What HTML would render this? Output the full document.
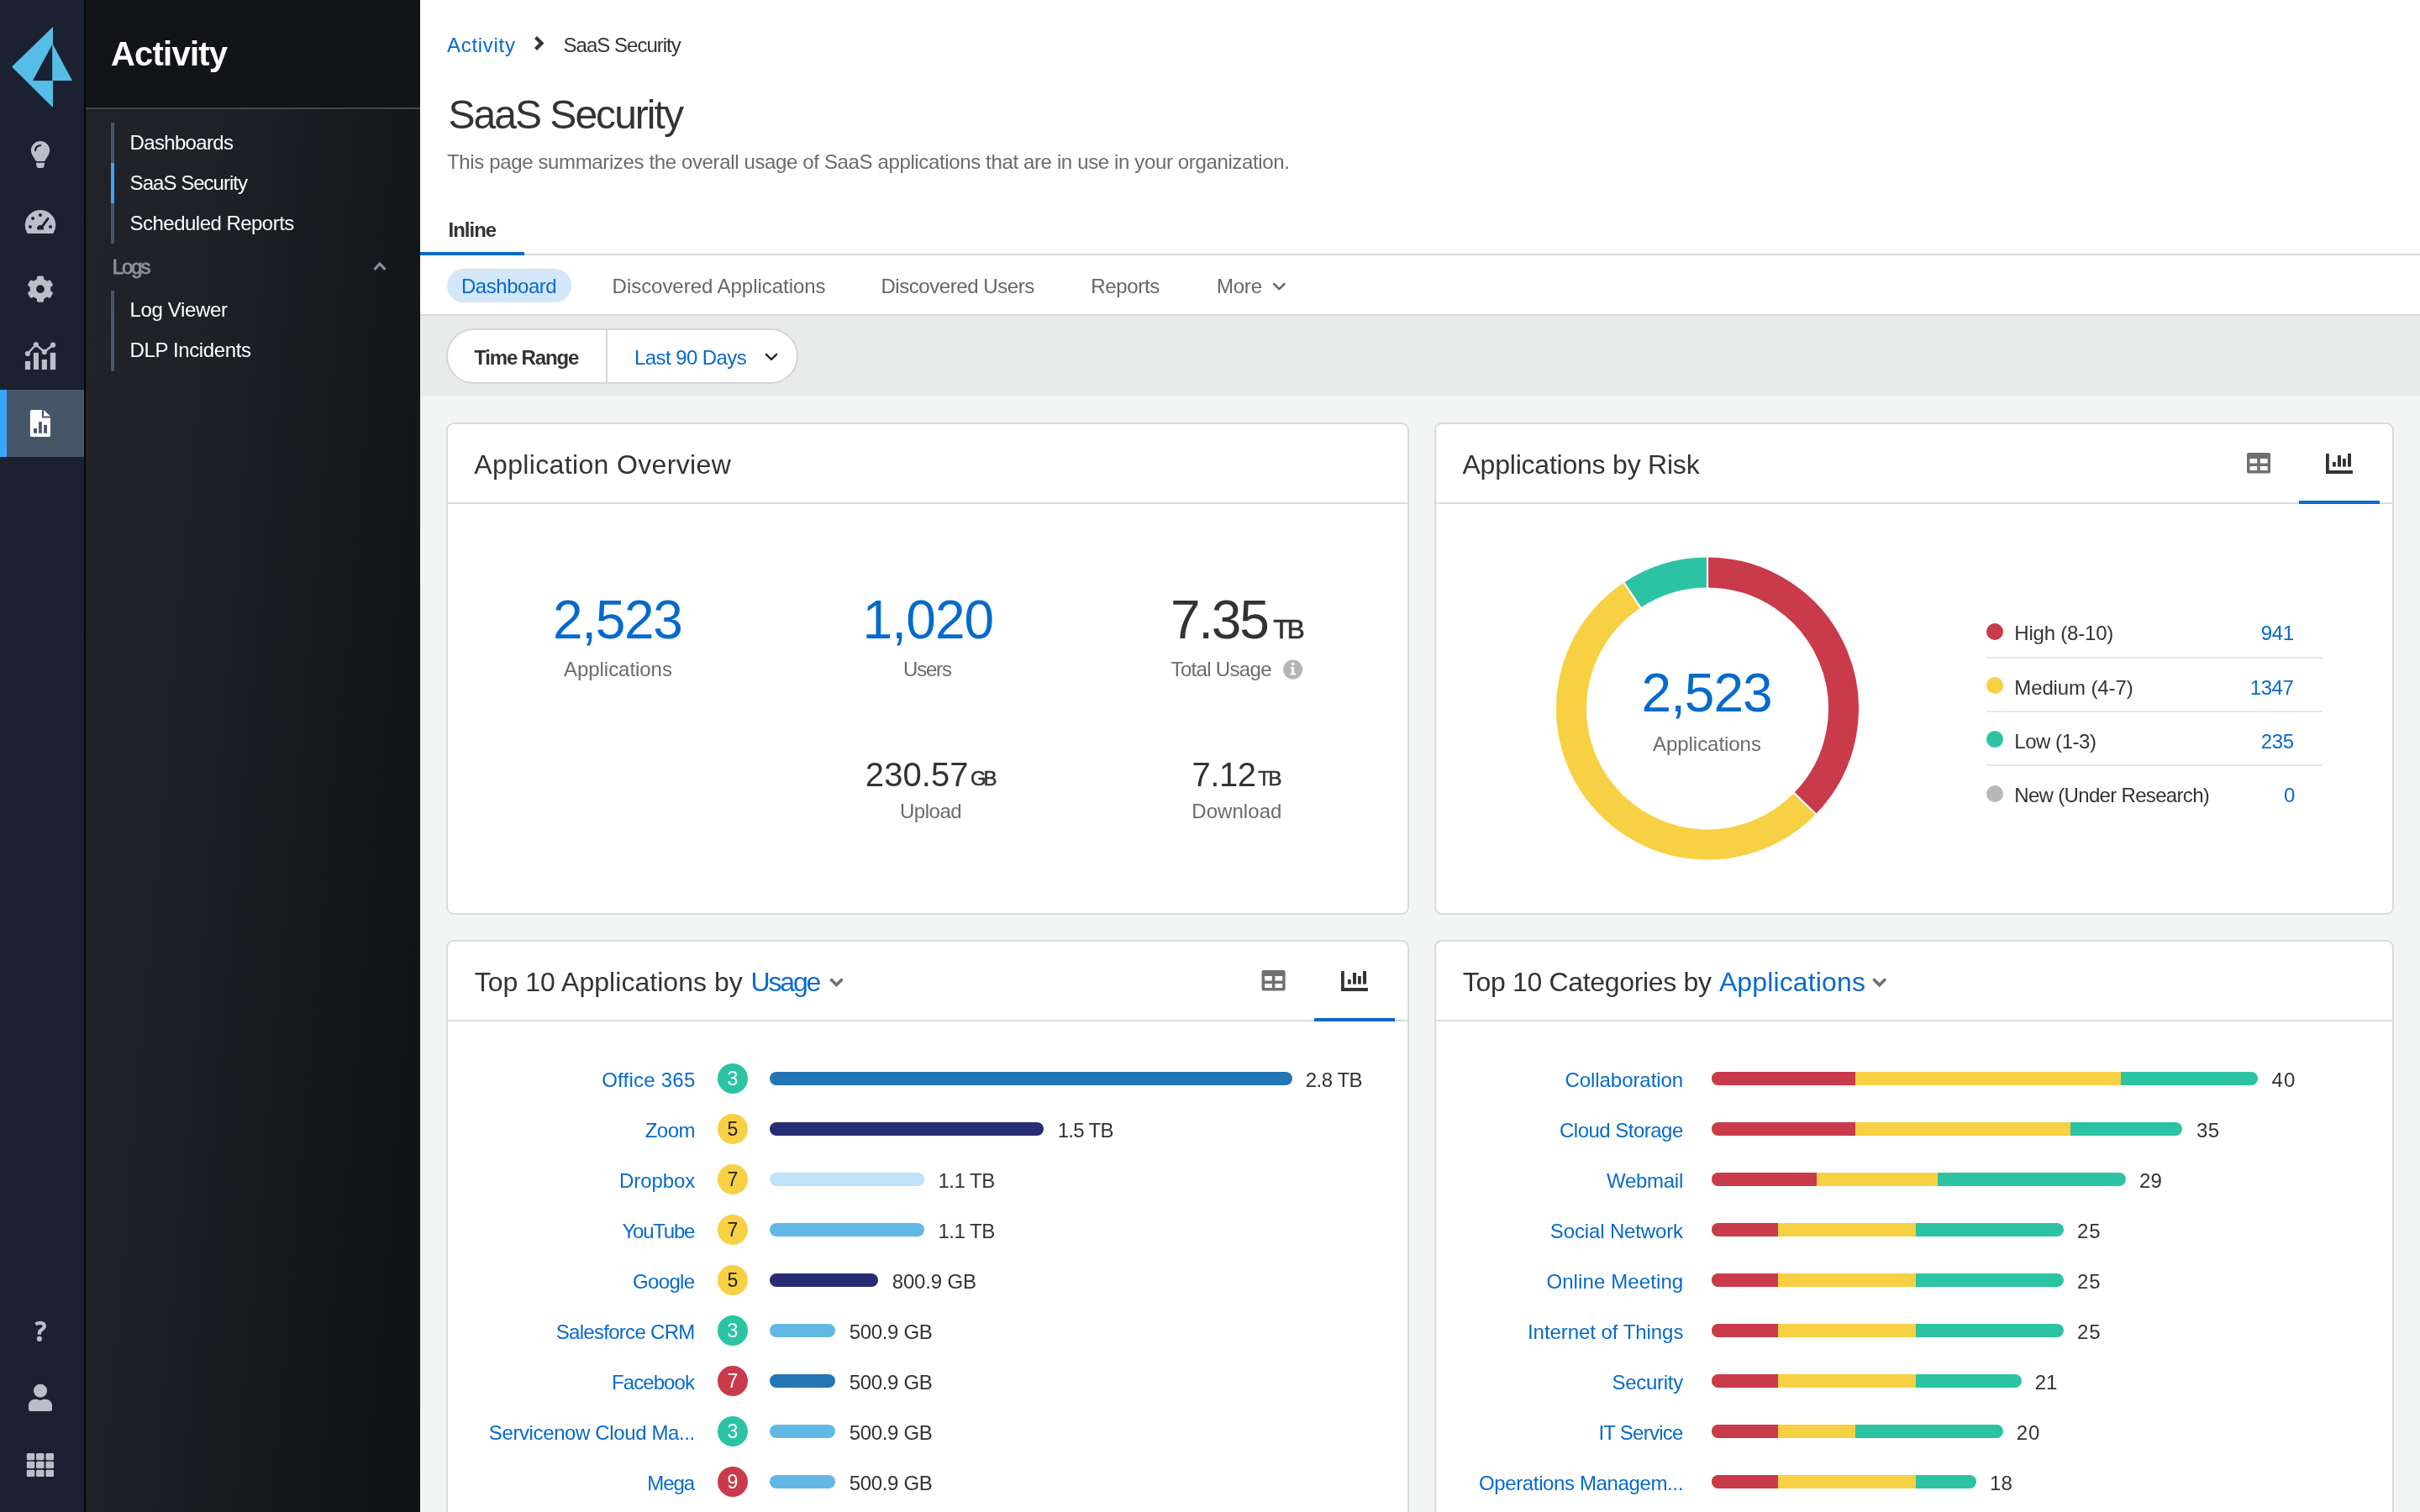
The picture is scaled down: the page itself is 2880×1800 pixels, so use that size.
<!DOCTYPE html>
<html><head><meta charset="utf-8"><title>SaaS Security</title>
<style>
html,body{margin:0;padding:0;width:2880px;height:1800px;overflow:hidden;background:#f2f5f4;}
body{position:relative;font-family:"Liberation Sans",sans-serif;}
#root{position:absolute;left:0;top:0;width:2880px;height:1800px;will-change:transform;}
.t{position:absolute;white-space:nowrap;}
svg{overflow:visible}
</style></head><body><div id="root">
<div style="position:absolute;left:0px;top:0px;width:100px;height:1800px;background:#1b2130;"></div>
<div style="position:absolute;left:100px;top:0px;width:2px;height:1800px;background:#050506;"></div>
<div style="position:absolute;left:102px;top:0px;width:398px;height:128px;background:#131417;"></div>
<div style="position:absolute;left:102px;top:128px;width:398px;height:2px;background:#45464a;"></div>
<div style="position:absolute;left:102px;top:130px;width:398px;height:1670px;background:linear-gradient(95deg,#202328 0%,#1e2126 30%,#16181c 62%,#111216 100%);"></div>
<div style="position:absolute;left:500px;top:0px;width:2380px;height:376px;background:#ffffff;"></div>
<div style="position:absolute;left:500px;top:302px;width:2380px;height:2px;background:#d9dbdb;"></div>
<div style="position:absolute;left:500px;top:374px;width:2380px;height:2px;background:#d9dbdb;"></div>
<div style="position:absolute;left:500px;top:376px;width:2380px;height:95px;background:#e9ebea;"></div>
<div style="position:absolute;left:500px;top:471px;width:2380px;height:1329px;background:#f2f5f4;"></div>
<svg style="position:absolute;left:0px;top:0px;" width="100" height="140" viewBox="0 0 100 140"><path fill="#55bde6" d="M14,79.5 L63,32 L63,128 Z M39,96 L62.2,53 L62.2,96 Z" fill-rule="evenodd"/><path fill="#55bde6" d="M63,53 L86,96 L63,96 Z"/></svg>
<svg style="position:absolute;left:20px;top:160px;" width="60" height="50" viewBox="20 160 60 50"><path fill="#b9bfc9" d="M48,167.9 A11.1,11.1 0 0 1 59.1,179 C59.1,184 55.3,187.5 53.1,192.1 L42.9,192.1 C40.7,187.5 36.9,184 36.9,179 A11.1,11.1 0 0 1 48,167.9 Z"/><path fill="#b9bfc9" d="M43,193.8 H53 L52.6,197.2 C52.3,199.1 51.1,200.1 49.4,200.1 H46.6 C44.9,200.1 43.7,199.1 43.4,197.2 Z"/><path d="M41.9,179 A7,7 0 0 1 48.1,173" stroke="#111722" stroke-width="2.1" stroke-linecap="round" fill="none"/></svg>
<svg style="position:absolute;left:20px;top:240px;" width="60" height="50" viewBox="20 240 60 50"><path fill="#b9bfc9" d="M32.7,278 A18.2,18.2 0 1 1 63.3,278 Z"/><g fill="#1b2130"><circle cx="48" cy="255.9" r="2"/><circle cx="39.1" cy="259.9" r="2"/><circle cx="35.9" cy="269.9" r="2"/><circle cx="60" cy="269.9" r="2"/><path d="M44,273.6 V272 C44,269.7 45.8,268 48,268 C50.2,268 51.9,269.6 51.9,271.8 V273.6 Z"/></g><path d="M49.5,270.5 L57,260.3" stroke="#1b2130" stroke-width="2.9" stroke-linecap="round"/></svg>
<svg style="position:absolute;left:20px;top:320px;" width="60" height="50" viewBox="20 320 60 50"><g fill="#b9bfc9"><circle cx="48" cy="344.1" r="12.3"/><rect x="43.9" y="328.5" width="8.2" height="6.299999999999999" rx="2" transform="rotate(0 48 344.1)"/><rect x="43.9" y="328.5" width="8.2" height="6.299999999999999" rx="2" transform="rotate(60 48 344.1)"/><rect x="43.9" y="328.5" width="8.2" height="6.299999999999999" rx="2" transform="rotate(120 48 344.1)"/><rect x="43.9" y="328.5" width="8.2" height="6.299999999999999" rx="2" transform="rotate(180 48 344.1)"/><rect x="43.9" y="328.5" width="8.2" height="6.299999999999999" rx="2" transform="rotate(240 48 344.1)"/><rect x="43.9" y="328.5" width="8.2" height="6.299999999999999" rx="2" transform="rotate(300 48 344.1)"/></g><circle cx="48" cy="344.1" r="4.9" fill="#1b2130"/></svg>
<svg style="position:absolute;left:20px;top:400px;" width="60" height="50" viewBox="20 400 60 50"><g fill="#b9bfc9"><rect x="29.9" y="429.9" width="6.2" height="10.1"/><rect x="39.9" y="419.9" width="6.1" height="20.1"/><rect x="49.8" y="427.9" width="6.1" height="12.1"/><rect x="59.8" y="419.9" width="6.4" height="20.1"/><circle cx="32.9" cy="421" r="3.1"/><circle cx="42.8" cy="410.3" r="3.1"/><circle cx="52.8" cy="418.9" r="3.1"/><circle cx="63" cy="410.7" r="3.1"/></g><path d="M32.9,421 L42.8,410.3 L52.8,418.9 L63,410.7" stroke="#b9bfc9" stroke-width="2.4" fill="none"/></svg>
<div style="position:absolute;left:0px;top:464px;width:100px;height:80px;background:#475568;"></div>
<div style="position:absolute;left:0px;top:464px;width:8px;height:80px;background:#3aa6fa;"></div>
<svg style="position:absolute;left:30px;top:480px;" width="40" height="50" viewBox="30 480 40 50"><path fill="#fff" d="M37.5,488 H50 V497.5 H60 V518.5 A1.6,1.6 0 0 1 58.4,520 H37.5 A1.6,1.6 0 0 1 35.9,518.4 V489.6 A1.6,1.6 0 0 1 37.5,488 Z"/><path fill="#fff" d="M52,488 L60,495.6 L52,495.6 Z"/><g fill="#475568"><rect x="40" y="510" width="4" height="5.7"/><rect x="46.1" y="502.1" width="3.7" height="13.6"/><rect x="52.1" y="506" width="3.9" height="9.7"/></g></svg>
<svg style="position:absolute;left:30px;top:1565px;" width="36" height="40" viewBox="30 1565 36 40"><path d="M42.3,1576.3 C44.5,1575.2 46.5,1574.9 48.3,1574.9 C51,1574.9 52.85,1576.5 52.85,1578.6 C52.85,1580.8 51.3,1581.9 49.5,1583 C47.6,1584.2 46.9,1585 46.9,1587 L46.9,1588.7" stroke="#b9bfc9" stroke-width="4.3" fill="none"/><circle cx="46.9" cy="1593.8" r="3.1" fill="#b9bfc9"/></svg>
<svg style="position:absolute;left:20px;top:1640px;" width="60" height="50" viewBox="20 1640 60 50"><g fill="#b9bfc9"><circle cx="48" cy="1655.7" r="8"/><path d="M34,1678 V1673.5 C34,1669 37.5,1665.8 42,1665.8 H44.3 C45.6,1666.6 46.7,1666.9 48,1666.9 C49.3,1666.9 50.4,1666.6 51.7,1665.8 H54 C58.5,1665.8 62,1669 62,1673.5 V1678 A2,2 0 0 1 60,1680 H36 A2,2 0 0 1 34,1678 Z"/></g></svg>
<svg style="position:absolute;left:20px;top:1720px;" width="60" height="50" viewBox="20 1720 60 50"><g fill="#b9bfc9"><rect x="31.8" y="1730" width="9.5" height="8.2" rx="1.5"/><rect x="31.8" y="1739.8" width="9.5" height="8.2" rx="1.5"/><rect x="31.8" y="1749.7" width="9.5" height="8.2" rx="1.5"/><rect x="43.0" y="1730" width="9.5" height="8.2" rx="1.5"/><rect x="43.0" y="1739.8" width="9.5" height="8.2" rx="1.5"/><rect x="43.0" y="1749.7" width="9.5" height="8.2" rx="1.5"/><rect x="54.5" y="1730" width="9.5" height="8.2" rx="1.5"/><rect x="54.5" y="1739.8" width="9.5" height="8.2" rx="1.5"/><rect x="54.5" y="1749.7" width="9.5" height="8.2" rx="1.5"/></g></svg>
<div class="t" style="left:132.00px;top:44.13px;font-size:40px;line-height:40px;color:#ffffff;letter-spacing:-0.786px; font-weight:700;">Activity</div>
<div style="position:absolute;left:132px;top:146px;width:4px;height:48px;background:#4a5568;"></div>
<div style="position:absolute;left:132px;top:194px;width:4px;height:48px;background:#3aa6fa;"></div>
<div style="position:absolute;left:132px;top:242px;width:4px;height:48px;background:#4a5568;"></div>
<div style="position:absolute;left:132px;top:346px;width:4px;height:96px;background:#4a5568;"></div>
<div class="t" style="left:154.60px;top:157.98px;font-size:24px;line-height:24px;color:#ffffff;letter-spacing:-0.678px;">Dashboards</div>
<div class="t" style="left:154.60px;top:205.98px;font-size:24px;line-height:24px;color:#ffffff;letter-spacing:-0.967px;">SaaS Security</div>
<div class="t" style="left:154.60px;top:253.98px;font-size:24px;line-height:24px;color:#ffffff;letter-spacing:-0.528px;">Scheduled Reports</div>
<div class="t" style="left:133.70px;top:306.08px;font-size:24px;line-height:24px;color:#8a919c;letter-spacing:-2.067px;-webkit-text-stroke:0.8px #8a919c;">Logs</div>
<svg style="position:absolute;left:440px;top:305px;" width="25" height="25" viewBox="440 305 25 25"><path d="M445.5,321 L452,314 L458.5,321" stroke="#8a919c" stroke-width="3.2" fill="none"/></svg>
<div class="t" style="left:154.60px;top:357.28px;font-size:24px;line-height:24px;color:#ffffff;letter-spacing:-0.372px;">Log Viewer</div>
<div class="t" style="left:154.60px;top:404.88px;font-size:24px;line-height:24px;color:#ffffff;letter-spacing:-0.383px;">DLP Incidents</div>
<div class="t" style="left:532.00px;top:41.78px;font-size:24px;line-height:24px;color:#056acb;letter-spacing:0.700px;">Activity</div>
<svg style="position:absolute;left:630px;top:38px;" width="25" height="28" viewBox="630 38 25 28"><path d="M637.5,44.4 L644.5,51.4 L637.5,58.4" stroke="#333333" stroke-width="4.2" fill="none"/></svg>
<div class="t" style="left:670.60px;top:41.78px;font-size:24px;line-height:24px;color:#333333;letter-spacing:-0.992px;">SaaS Security</div>
<div class="t" style="left:533.50px;top:113.26px;font-size:48px;line-height:48px;color:#333333;letter-spacing:-1.979px;">SaaS Security</div>
<div class="t" style="left:532.00px;top:181.48px;font-size:24px;line-height:24px;color:#6b6b6b;letter-spacing:-0.365px;">This page summarizes the overall usage of SaaS applications that are in use in your organization.</div>
<div class="t" style="left:533.60px;top:261.78px;font-size:24px;line-height:24px;color:#333333;letter-spacing:-1.030px; font-weight:700;">Inline</div>
<div style="position:absolute;left:500px;top:300px;width:124px;height:4px;background:#056acb;"></div>
<div style="position:absolute;left:532px;top:320px;width:148px;height:40px;background:#d3e7fa;border-radius:20px;"></div>
<div class="t" style="left:549.00px;top:329.28px;font-size:24px;line-height:24px;color:#056acb;letter-spacing:-0.463px;">Dashboard</div>
<div class="t" style="left:728.60px;top:329.28px;font-size:24px;line-height:24px;color:#666666;letter-spacing:-0.039px;">Discovered Applications</div>
<div class="t" style="left:1048.40px;top:329.28px;font-size:24px;line-height:24px;color:#666666;letter-spacing:-0.433px;">Discovered Users</div>
<div class="t" style="left:1298.30px;top:329.28px;font-size:24px;line-height:24px;color:#666666;letter-spacing:-0.350px;">Reports</div>
<div class="t" style="left:1447.90px;top:329.28px;font-size:24px;line-height:24px;color:#666666;letter-spacing:-0.183px;">More</div>
<svg style="position:absolute;left:1505px;top:325px;" width="35" height="30" viewBox="1505 325 35 30"><path d="M1516.2,338 L1522.3,344.2 L1528.4,338" stroke="#666666" stroke-width="2.5" stroke-linecap="round" stroke-linejoin="round" fill="none"/></svg>
<div style="position:absolute;left:531px;top:391px;width:419px;height:66px;box-sizing:border-box;border:2px solid #d4d6d6;border-radius:33px;background:#fff"></div>
<div style="position:absolute;left:721px;top:393px;width:2px;height:62px;background:#d4d6d6;"></div>
<div class="t" style="left:564.20px;top:413.58px;font-size:24px;line-height:24px;color:#333333;letter-spacing:-1.167px; font-weight:700;">Time Range</div>
<div class="t" style="left:755.00px;top:413.58px;font-size:24px;line-height:24px;color:#056acb;letter-spacing:-0.573px;">Last 90 Days</div>
<svg style="position:absolute;left:900px;top:410px;" width="35" height="30" viewBox="900 410 35 30"><path d="M911.9,421.9 L917.9,428 L924.1,421.9" stroke="#222" stroke-width="2.4" stroke-linecap="round" stroke-linejoin="round" fill="none"/></svg>
<div style="position:absolute;left:531px;top:503px;width:1146px;height:586px;box-sizing:border-box;border:2px solid #d9dbda;border-radius:9px;background:#fff"></div>
<div style="position:absolute;left:1707px;top:503px;width:1142px;height:586px;box-sizing:border-box;border:2px solid #d9dbda;border-radius:9px;background:#fff"></div>
<div style="position:absolute;left:531px;top:1119px;width:1146px;height:800px;box-sizing:border-box;border:2px solid #d9dbda;border-radius:9px;background:#fff"></div>
<div style="position:absolute;left:1707px;top:1119px;width:1142px;height:800px;box-sizing:border-box;border:2px solid #d9dbda;border-radius:9px;background:#fff"></div>
<div style="position:absolute;left:533px;top:598px;width:1142px;height:2px;background:#dcdedd;"></div>
<div style="position:absolute;left:1709px;top:598px;width:1138px;height:2px;background:#dcdedd;"></div>
<div style="position:absolute;left:533px;top:1214px;width:1142px;height:2px;background:#dcdedd;"></div>
<div style="position:absolute;left:1709px;top:1214px;width:1138px;height:2px;background:#dcdedd;"></div>
<div class="t" style="left:564.30px;top:537.31px;font-size:32px;line-height:32px;color:#333333;letter-spacing:0.353px;">Application Overview</div>
<div class="t" style="left:658.00px;top:705.81px;font-size:64px;line-height:64px;color:#056acb;letter-spacing:-1.312px;">2,523</div>
<div class="t" style="left:671.00px;top:785.38px;font-size:24px;line-height:24px;color:#6b6b6b;letter-spacing:-0.045px;">Applications</div>
<div class="t" style="left:1026.60px;top:705.81px;font-size:64px;line-height:64px;color:#056acb;letter-spacing:-0.887px;">1,020</div>
<div class="t" style="left:1075.00px;top:785.38px;font-size:24px;line-height:24px;color:#6b6b6b;letter-spacing:-1.188px;">Users</div>
<div class="t" style="left:1393.00px;top:705.81px;font-size:64px;line-height:64px;color:#333333;letter-spacing:-2.267px;">7.35</div>
<div class="t" style="left:1515.20px;top:732.51px;font-size:32px;line-height:32px;color:#333333;letter-spacing:-3.300px;-webkit-text-stroke:0.6px #333;">TB</div>
<div class="t" style="left:1393.60px;top:785.38px;font-size:24px;line-height:24px;color:#6b6b6b;letter-spacing:-0.685px;">Total Usage</div>
<svg style="position:absolute;left:1520px;top:780px;" width="40" height="35" viewBox="1520 780 40 35"><circle cx="1538.6" cy="797" r="11.5" fill="#b4b4b4"/><circle cx="1538.6" cy="790.5" r="1.9" fill="#fff"/><path fill="#fff" d="M1536,794 H1540.2 V801.5 H1542 V803.5 H1535.2 V801.5 H1537 V796 H1536 Z"/></svg>
<div class="t" style="left:1029.80px;top:901.93px;font-size:40px;line-height:40px;color:#333333;letter-spacing:0.090px;">230.57</div>
<div class="t" style="left:1155.00px;top:915.48px;font-size:24px;line-height:24px;color:#333333;letter-spacing:-3.250px;-webkit-text-stroke:0.5px #333;">GB</div>
<div class="t" style="left:1071.00px;top:953.88px;font-size:24px;line-height:24px;color:#6b6b6b;letter-spacing:-0.480px;">Upload</div>
<div class="t" style="left:1418.50px;top:901.93px;font-size:40px;line-height:40px;color:#333333;letter-spacing:-0.417px;">7.12</div>
<div class="t" style="left:1497.00px;top:915.48px;font-size:24px;line-height:24px;color:#333333;letter-spacing:-2.050px;-webkit-text-stroke:0.5px #333;">TB</div>
<div class="t" style="left:1418.30px;top:953.88px;font-size:24px;line-height:24px;color:#6b6b6b;letter-spacing:0.050px;">Download</div>
<div class="t" style="left:1740.50px;top:537.11px;font-size:32px;line-height:32px;color:#333333;letter-spacing:-0.221px;">Applications by Risk</div>
<svg style="position:absolute;left:2670px;top:535px;" width="36" height="32" viewBox="2670 535 36 32"><path fill="#707070" fill-rule="evenodd" d="M2676,539 H2700 A2,2 0 0 1 2702,541 V561.6 A2,2 0 0 1 2700,563.6 H2676 A2,2 0 0 1 2674,561.6 V541 A2,2 0 0 1 2676,539 Z M2677.5,545.9 V551.5 H2686.2 V545.9 Z M2689.8,545.9 V551.5 H2698.6 V545.9 Z M2677.5,555 V560 H2686.2 V555 Z M2689.8,555 V560 H2698.6 V555 Z"/></svg>
<svg style="position:absolute;left:2760px;top:535px;" width="45" height="35" viewBox="2760 535 45 35"><g fill="#333"><rect x="2768" y="540" width="3.8" height="24" rx="0.6"/><rect x="2768" y="560" width="32" height="4" rx="0.6"/><rect x="2776" y="550" width="3.8" height="5.6"/><rect x="2782" y="542" width="4" height="13.6"/><rect x="2788" y="546" width="3.8" height="9.6"/><rect x="2794" y="540" width="4" height="15.6"/></g></svg>
<div style="position:absolute;left:2736px;top:596px;width:96px;height:4px;background:#056acb;"></div>
<svg style="position:absolute;left:1840px;top:650px;" width="384" height="390" viewBox="1840 650 384 390"><path d="M2032.00,681.50 A162.0,162.0 0 0 1 2148.00,956.58" stroke="#c93a4b" stroke-width="36" fill="none"/><path d="M2148.00,956.58 A162.0,162.0 0 1 1 1942.51,708.46" stroke="#f8d043" stroke-width="36" fill="none"/><path d="M1942.51,708.46 A162.0,162.0 0 0 1 2032.00,681.50" stroke="#2cc3a3" stroke-width="36" fill="none"/><line x1="2032.00" y1="701.50" x2="2032.00" y2="661.50" stroke="#fff" stroke-width="2.2"/><line x1="2133.68" y1="942.62" x2="2162.33" y2="970.54" stroke="#fff" stroke-width="2.2"/><line x1="1953.56" y1="725.13" x2="1931.46" y2="691.79" stroke="#fff" stroke-width="2.2"/></svg>
<div class="t" style="left:1953.60px;top:792.51px;font-size:64px;line-height:64px;color:#056acb;letter-spacing:-1.062px;">2,523</div>
<div class="t" style="left:1967.00px;top:874.18px;font-size:24px;line-height:24px;color:#6b6b6b;letter-spacing:-0.045px;">Applications</div>
<div style="position:absolute;left:2364px;top:742.0px;width:20px;height:20px;border-radius:10px;background:#c93a4b"></div>
<div class="t" style="left:2397.30px;top:742.48px;font-size:24px;line-height:24px;color:#333333;letter-spacing:-0.200px;">High (8-10)</div>
<div class="t" style="left:2690.80px;top:742.48px;font-size:24px;line-height:24px;color:#056acb;letter-spacing:-0.400px;">941</div>
<div style="position:absolute;left:2364px;top:782px;width:400px;height:2px;background:#e6e7e7;"></div>
<div style="position:absolute;left:2364px;top:806.4px;width:20px;height:20px;border-radius:10px;background:#f8d043"></div>
<div class="t" style="left:2397.30px;top:806.88px;font-size:24px;line-height:24px;color:#333333;letter-spacing:-0.123px;">Medium (4-7)</div>
<div class="t" style="left:2677.70px;top:806.88px;font-size:24px;line-height:24px;color:#056acb;letter-spacing:-0.400px;">1347</div>
<div style="position:absolute;left:2364px;top:846px;width:400px;height:2px;background:#e6e7e7;"></div>
<div style="position:absolute;left:2364px;top:870.2px;width:20px;height:20px;border-radius:10px;background:#2cc3a3"></div>
<div class="t" style="left:2397.30px;top:870.68px;font-size:24px;line-height:24px;color:#333333;letter-spacing:-0.469px;">Low (1-3)</div>
<div class="t" style="left:2690.80px;top:870.68px;font-size:24px;line-height:24px;color:#056acb;letter-spacing:-0.400px;">235</div>
<div style="position:absolute;left:2364px;top:910px;width:400px;height:2px;background:#e6e7e7;"></div>
<div style="position:absolute;left:2364px;top:934.6px;width:20px;height:20px;border-radius:10px;background:#b8b8b8"></div>
<div class="t" style="left:2397.30px;top:935.08px;font-size:24px;line-height:24px;color:#333333;letter-spacing:-0.679px;">New (Under Research)</div>
<div class="t" style="left:2718.00px;top:935.08px;font-size:24px;line-height:24px;color:#056acb;letter-spacing:0.000px;">0</div>
<div class="t" style="left:564.70px;top:1152.61px;font-size:32px;line-height:32px;color:#333333;letter-spacing:0.029px;">Top 10 Applications by</div>
<div class="t" style="left:893.50px;top:1152.61px;font-size:32px;line-height:32px;color:#056acb;letter-spacing:-2.175px;">Usage</div>
<svg style="position:absolute;left:980px;top:1155px;" width="30" height="30" viewBox="980 1155 30 30"><path d="M988.5,1165.5 L995.5,1172.5 L1002.5,1165.5" stroke="#707070" stroke-width="3.6" fill="none"/></svg>
<svg style="position:absolute;left:1495px;top:1150px;" width="40" height="35" viewBox="1495 1150 40 35"><path fill="#707070" fill-rule="evenodd" d="M1503.6,1155 H1527.6 A2,2 0 0 1 1529.6,1157 V1177.6 A2,2 0 0 1 1527.6,1179.6 H1503.6 A2,2 0 0 1 1501.6,1177.6 V1157 A2,2 0 0 1 1503.6,1155 Z M1505.1,1161.9 V1167.5 H1513.8 V1161.9 Z M1517.4,1161.9 V1167.5 H1526.2 V1161.9 Z M1505.1,1171 V1176 H1513.8 V1171 Z M1517.4,1171 V1176 H1526.2 V1171 Z"/></svg>
<svg style="position:absolute;left:1590px;top:1150px;" width="45" height="35" viewBox="1590 1150 45 35"><g fill="#333"><rect x="1596" y="1156" width="3.8" height="24" rx="0.6"/><rect x="1596" y="1176" width="32" height="4" rx="0.6"/><rect x="1604" y="1166" width="3.8" height="5.6"/><rect x="1610" y="1158" width="4" height="13.6"/><rect x="1616" y="1162" width="3.8" height="9.6"/><rect x="1622" y="1156" width="4" height="15.6"/></g></svg>
<div style="position:absolute;left:1564px;top:1212px;width:96px;height:4px;background:#056acb;"></div>
<div class="t" style="left:716.20px;top:1273.68px;font-size:24px;line-height:24px;color:#056acb;letter-spacing:0.233px;">Office 365</div>
<div style="position:absolute;left:854px;top:1266px;width:36px;height:36px;border-radius:18px;background:#2cc3a3"></div>
<div class="t" style="left:865.62px;top:1272.83px;font-size:23px;line-height:23px;color:#fff">3</div>
<div style="position:absolute;left:916px;top:1276px;width:622px;height:16px;background:#2376b4;border-radius:8px;"></div>
<div class="t" style="left:1553.70px;top:1273.68px;font-size:24px;line-height:24px;color:#333333;letter-spacing:-0.470px;">2.8 TB</div>
<div class="t" style="left:767.80px;top:1333.68px;font-size:24px;line-height:24px;color:#056acb;letter-spacing:-0.583px;">Zoom</div>
<div style="position:absolute;left:854px;top:1326px;width:36px;height:36px;border-radius:18px;background:#f8d043"></div>
<div class="t" style="left:865.62px;top:1332.83px;font-size:23px;line-height:23px;color:#222">5</div>
<div style="position:absolute;left:916px;top:1336px;width:326.3px;height:16px;background:#272c74;border-radius:8px;"></div>
<div class="t" style="left:1258.70px;top:1333.68px;font-size:24px;line-height:24px;color:#333333;letter-spacing:-0.670px;">1.5 TB</div>
<div class="t" style="left:737.00px;top:1393.68px;font-size:24px;line-height:24px;color:#056acb;letter-spacing:-0.075px;">Dropbox</div>
<div style="position:absolute;left:854px;top:1386px;width:36px;height:36px;border-radius:18px;background:#f8d043"></div>
<div class="t" style="left:865.62px;top:1392.83px;font-size:23px;line-height:23px;color:#222">7</div>
<div style="position:absolute;left:916px;top:1396px;width:184px;height:16px;background:#bfe3f8;border-radius:8px;"></div>
<div class="t" style="left:1116.40px;top:1393.68px;font-size:24px;line-height:24px;color:#333333;letter-spacing:-0.470px;">1.1 TB</div>
<div class="t" style="left:740.50px;top:1453.68px;font-size:24px;line-height:24px;color:#056acb;letter-spacing:-1.242px;">YouTube</div>
<div style="position:absolute;left:854px;top:1446px;width:36px;height:36px;border-radius:18px;background:#f8d043"></div>
<div class="t" style="left:865.62px;top:1452.83px;font-size:23px;line-height:23px;color:#222">7</div>
<div style="position:absolute;left:916px;top:1456px;width:184px;height:16px;background:#62b8e5;border-radius:8px;"></div>
<div class="t" style="left:1116.40px;top:1453.68px;font-size:24px;line-height:24px;color:#333333;letter-spacing:-0.470px;">1.1 TB</div>
<div class="t" style="left:752.90px;top:1513.68px;font-size:24px;line-height:24px;color:#056acb;letter-spacing:-0.620px;">Google</div>
<div style="position:absolute;left:854px;top:1506px;width:36px;height:36px;border-radius:18px;background:#f8d043"></div>
<div class="t" style="left:865.62px;top:1512.83px;font-size:23px;line-height:23px;color:#222">5</div>
<div style="position:absolute;left:916px;top:1516px;width:129.4px;height:16px;background:#272c74;border-radius:8px;"></div>
<div class="t" style="left:1061.80px;top:1513.68px;font-size:24px;line-height:24px;color:#333333;letter-spacing:-0.186px;">800.9 GB</div>
<div class="t" style="left:661.70px;top:1573.68px;font-size:24px;line-height:24px;color:#056acb;letter-spacing:-0.704px;">Salesforce CRM</div>
<div style="position:absolute;left:854px;top:1566px;width:36px;height:36px;border-radius:18px;background:#2cc3a3"></div>
<div class="t" style="left:865.62px;top:1572.83px;font-size:23px;line-height:23px;color:#fff">3</div>
<div style="position:absolute;left:916px;top:1576px;width:78px;height:16px;background:#62b8e5;border-radius:8px;"></div>
<div class="t" style="left:1010.70px;top:1573.68px;font-size:24px;line-height:24px;color:#333333;letter-spacing:-0.329px;">500.9 GB</div>
<div class="t" style="left:728.10px;top:1633.68px;font-size:24px;line-height:24px;color:#056acb;letter-spacing:-0.936px;">Facebook</div>
<div style="position:absolute;left:854px;top:1626px;width:36px;height:36px;border-radius:18px;background:#c93a4b"></div>
<div class="t" style="left:865.62px;top:1632.83px;font-size:23px;line-height:23px;color:#fff">7</div>
<div style="position:absolute;left:916px;top:1636px;width:78px;height:16px;background:#2376b4;border-radius:8px;"></div>
<div class="t" style="left:1010.70px;top:1633.68px;font-size:24px;line-height:24px;color:#333333;letter-spacing:-0.329px;">500.9 GB</div>
<div class="t" style="left:581.80px;top:1693.68px;font-size:24px;line-height:24px;color:#056acb;letter-spacing:-0.381px;">Servicenow Cloud Ma...</div>
<div style="position:absolute;left:854px;top:1686px;width:36px;height:36px;border-radius:18px;background:#2cc3a3"></div>
<div class="t" style="left:865.62px;top:1692.83px;font-size:23px;line-height:23px;color:#fff">3</div>
<div style="position:absolute;left:916px;top:1696px;width:78px;height:16px;background:#62b8e5;border-radius:8px;"></div>
<div class="t" style="left:1010.70px;top:1693.68px;font-size:24px;line-height:24px;color:#333333;letter-spacing:-0.329px;">500.9 GB</div>
<div class="t" style="left:770.20px;top:1753.68px;font-size:24px;line-height:24px;color:#056acb;letter-spacing:-1.050px;">Mega</div>
<div style="position:absolute;left:854px;top:1746px;width:36px;height:36px;border-radius:18px;background:#c93a4b"></div>
<div class="t" style="left:865.62px;top:1752.83px;font-size:23px;line-height:23px;color:#fff">9</div>
<div style="position:absolute;left:916px;top:1756px;width:78px;height:16px;background:#62b8e5;border-radius:8px;"></div>
<div class="t" style="left:1010.70px;top:1753.68px;font-size:24px;line-height:24px;color:#333333;letter-spacing:-0.329px;">500.9 GB</div>
<div class="t" style="left:1740.80px;top:1152.71px;font-size:32px;line-height:32px;color:#333333;letter-spacing:-0.332px;">Top 10 Categories by</div>
<div class="t" style="left:2045.90px;top:1152.71px;font-size:32px;line-height:32px;color:#056acb;letter-spacing:0.136px;">Applications</div>
<svg style="position:absolute;left:2220px;top:1155px;" width="35" height="30" viewBox="2220 1155 35 30"><path d="M2229.5,1165.5 L2236.7,1172.7 L2243.9,1165.5" stroke="#707070" stroke-width="3.6" fill="none"/></svg>
<div class="t" style="left:1862.40px;top:1273.68px;font-size:24px;line-height:24px;color:#056acb;letter-spacing:-0.050px;">Collaboration</div>
<div style="position:absolute;left:2036.5px;top:1276px;width:650.9px;height:16px;border-radius:8px;overflow:hidden;background:#2cc3a3"><div style="position:absolute;left:0;top:0;width:487.5px;height:16px;background:#f8d043"></div><div style="position:absolute;left:0;top:0;width:171.5px;height:16px;background:#c93a4b"></div></div>
<div class="t" style="left:2703.50px;top:1273.68px;font-size:24px;line-height:24px;color:#333333;letter-spacing:1.050px;">40</div>
<div class="t" style="left:1856.00px;top:1333.68px;font-size:24px;line-height:24px;color:#056acb;letter-spacing:-0.517px;">Cloud Storage</div>
<div style="position:absolute;left:2036.5px;top:1336px;width:560.7px;height:16px;border-radius:8px;overflow:hidden;background:#2cc3a3"><div style="position:absolute;left:0;top:0;width:427.5px;height:16px;background:#f8d043"></div><div style="position:absolute;left:0;top:0;width:171.5px;height:16px;background:#c93a4b"></div></div>
<div class="t" style="left:2614.00px;top:1333.68px;font-size:24px;line-height:24px;color:#333333;letter-spacing:0.350px;">35</div>
<div class="t" style="left:1912.10px;top:1393.68px;font-size:24px;line-height:24px;color:#056acb;letter-spacing:-0.300px;">Webmail</div>
<div style="position:absolute;left:2036.5px;top:1396px;width:493.5px;height:16px;border-radius:8px;overflow:hidden;background:#2cc3a3"><div style="position:absolute;left:0;top:0;width:269.6px;height:16px;background:#f8d043"></div><div style="position:absolute;left:0;top:0;width:125.8px;height:16px;background:#c93a4b"></div></div>
<div class="t" style="left:2546.00px;top:1393.68px;font-size:24px;line-height:24px;color:#333333;letter-spacing:0.050px;">29</div>
<div class="t" style="left:1844.80px;top:1453.68px;font-size:24px;line-height:24px;color:#056acb;letter-spacing:-0.135px;">Social Network</div>
<div style="position:absolute;left:2036.5px;top:1456px;width:419.3px;height:16px;border-radius:8px;overflow:hidden;background:#2cc3a3"><div style="position:absolute;left:0;top:0;width:243.8px;height:16px;background:#f8d043"></div><div style="position:absolute;left:0;top:0;width:79.5px;height:16px;background:#c93a4b"></div></div>
<div class="t" style="left:2472.00px;top:1453.68px;font-size:24px;line-height:24px;color:#333333;letter-spacing:0.950px;">25</div>
<div class="t" style="left:1840.40px;top:1513.68px;font-size:24px;line-height:24px;color:#056acb;letter-spacing:0.108px;">Online Meeting</div>
<div style="position:absolute;left:2036.5px;top:1516px;width:419.3px;height:16px;border-radius:8px;overflow:hidden;background:#2cc3a3"><div style="position:absolute;left:0;top:0;width:243.8px;height:16px;background:#f8d043"></div><div style="position:absolute;left:0;top:0;width:79.5px;height:16px;background:#c93a4b"></div></div>
<div class="t" style="left:2472.00px;top:1513.68px;font-size:24px;line-height:24px;color:#333333;letter-spacing:0.950px;">25</div>
<div class="t" style="left:1818.00px;top:1573.68px;font-size:24px;line-height:24px;color:#056acb;letter-spacing:-0.056px;">Internet of Things</div>
<div style="position:absolute;left:2036.5px;top:1576px;width:419.3px;height:16px;border-radius:8px;overflow:hidden;background:#2cc3a3"><div style="position:absolute;left:0;top:0;width:243.8px;height:16px;background:#f8d043"></div><div style="position:absolute;left:0;top:0;width:79.5px;height:16px;background:#c93a4b"></div></div>
<div class="t" style="left:2472.00px;top:1573.68px;font-size:24px;line-height:24px;color:#333333;letter-spacing:0.950px;">25</div>
<div class="t" style="left:1918.50px;top:1633.68px;font-size:24px;line-height:24px;color:#056acb;letter-spacing:-0.279px;">Security</div>
<div style="position:absolute;left:2036.5px;top:1636px;width:369.1px;height:16px;border-radius:8px;overflow:hidden;background:#2cc3a3"><div style="position:absolute;left:0;top:0;width:243.8px;height:16px;background:#f8d043"></div><div style="position:absolute;left:0;top:0;width:79.5px;height:16px;background:#c93a4b"></div></div>
<div class="t" style="left:2421.70px;top:1633.68px;font-size:24px;line-height:24px;color:#333333;letter-spacing:0.050px;">21</div>
<div class="t" style="left:1902.40px;top:1693.68px;font-size:24px;line-height:24px;color:#056acb;letter-spacing:-0.733px;">IT Service</div>
<div style="position:absolute;left:2036.5px;top:1696px;width:347.1px;height:16px;border-radius:8px;overflow:hidden;background:#2cc3a3"><div style="position:absolute;left:0;top:0;width:171.5px;height:16px;background:#f8d043"></div><div style="position:absolute;left:0;top:0;width:79.5px;height:16px;background:#c93a4b"></div></div>
<div class="t" style="left:2399.70px;top:1693.68px;font-size:24px;line-height:24px;color:#333333;letter-spacing:1.050px;">20</div>
<div class="t" style="left:1760.00px;top:1753.68px;font-size:24px;line-height:24px;color:#056acb;letter-spacing:-0.373px;">Operations Managem...</div>
<div style="position:absolute;left:2036.5px;top:1756px;width:315.5px;height:16px;border-radius:8px;overflow:hidden;background:#2cc3a3"><div style="position:absolute;left:0;top:0;width:243.8px;height:16px;background:#f8d043"></div><div style="position:absolute;left:0;top:0;width:79.5px;height:16px;background:#c93a4b"></div></div>
<div class="t" style="left:2368.00px;top:1753.68px;font-size:24px;line-height:24px;color:#333333;letter-spacing:0.050px;">18</div>
</div></body></html>
